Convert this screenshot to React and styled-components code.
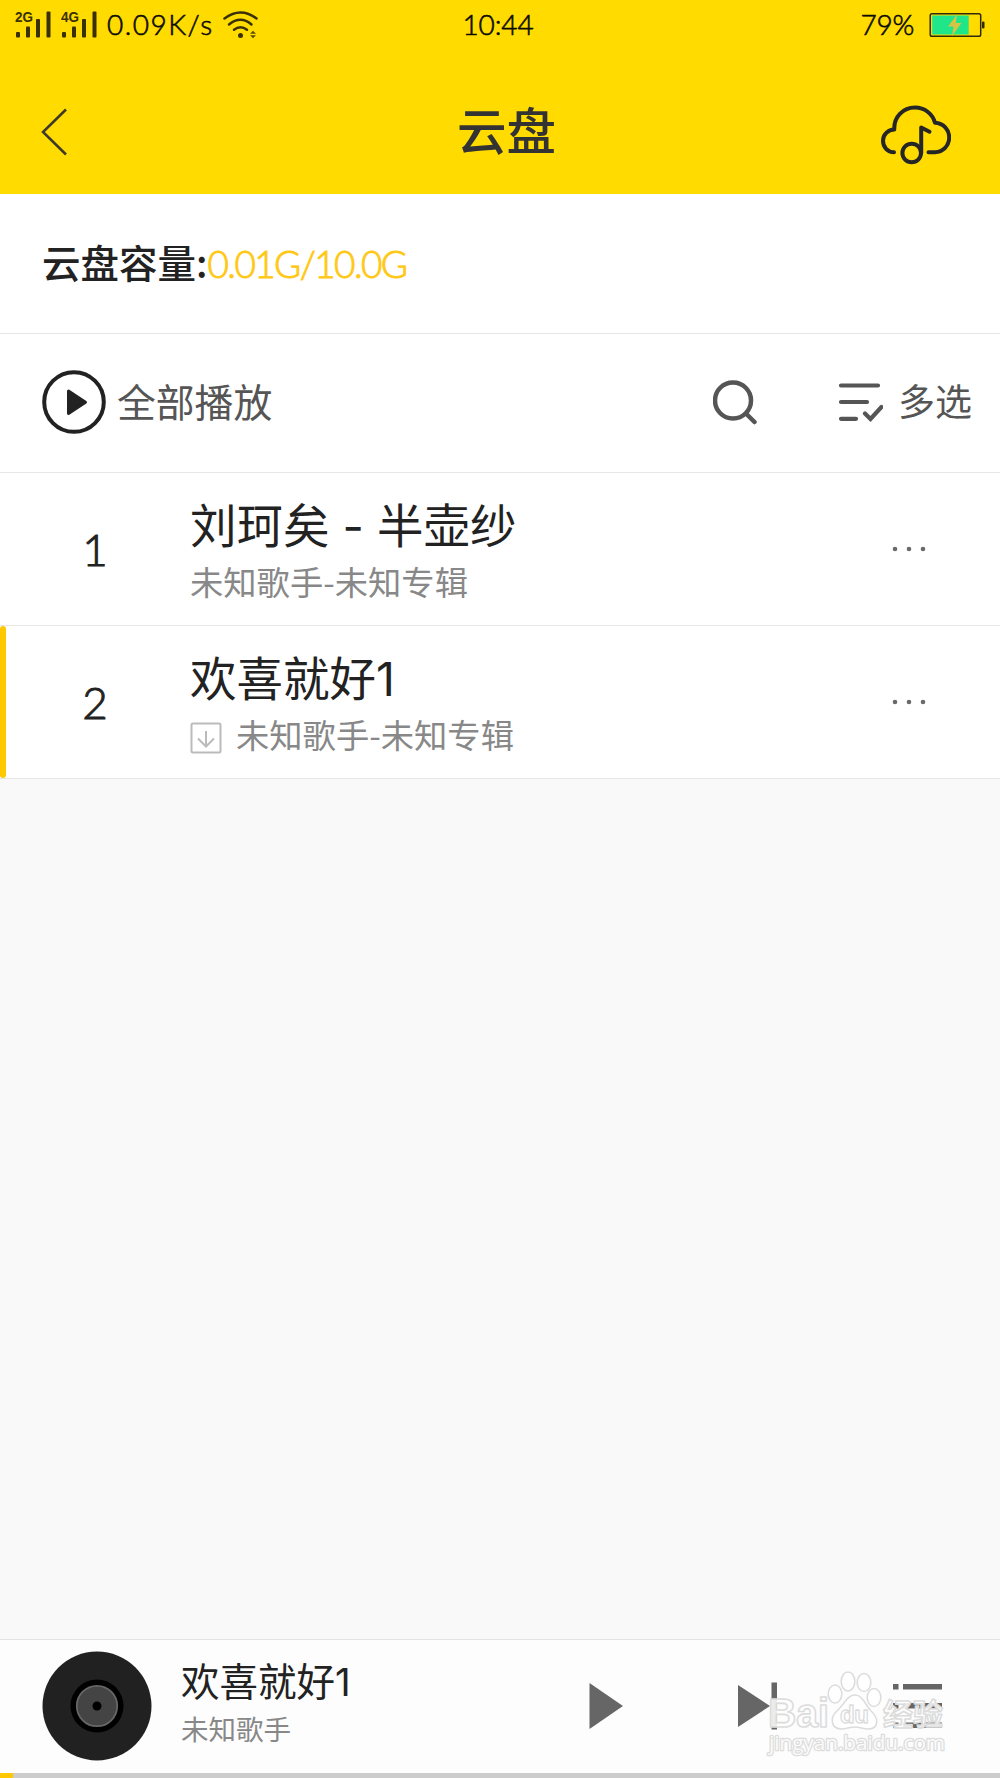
import React from "react";
import styled, { createGlobalStyle } from "styled-components";

const songs = [
  { id: 1, title: "刘珂矣 - 半壶纱", detail: "未知歌手-未知专辑" },
  {
    id: 2,
    title: "欢喜就好1",
    detail: "未知歌手-未知专辑",
    downloaded: true,
    active: true,
  },
];

const SignalIcon = ({ label }) => (
  <svg width="37" height="34" viewBox="0 -3 37 34">
    <text
      x="0"
      y="11"
      fontSize="14"
      fontWeight="700"
      fontFamily="Liberation Sans, sans-serif"
      textLength="18"
      lengthAdjust="spacingAndGlyphs"
      fill="#3a3005"
    >
      {label}
    </text>
    <g fill="#3a3005">
      <rect x="1" y="21" width="4" height="5.5" rx="1" />
      <rect x="11" y="15.5" width="4" height="11" rx="1" />
      <rect x="21" y="8" width="4" height="18.5" rx="1" />
      <rect x="31.500" y="0.500" width="4" height="26" rx="1" />
    </g>
  </svg>
);

const WifiIcon = () => (
  <svg width="36" height="28" viewBox="0 0 36 28">
    <g fill="none" stroke="#3a3005" strokeWidth="2.500" strokeLinecap="round">
      <path d="M1.500 7.500Q17.500 -4.500 33.500 7.500" />
      <path d="M6 13.500Q17.500 4 28.500 13.500" />
      <path d="M11 18.800Q17.500 13.800 24 18.800" />
    </g>
    <circle cx="17.500" cy="24.500" r="2.500" fill="#3a3005" />
    <path d="M27 22.800l3-3 3 3zM27 24.200l3 3 3-3z" fill="#5d4e05" />
  </svg>
);

const BatteryIcon = () => (
  <svg width="56" height="26" viewBox="0 0 56 26">
    <rect x="3.200" y="3.500" width="36.500" height="19" fill="#1ee689" />
    <rect
      x="1.200"
      y="1.700"
      width="50.500"
      height="22.500"
      rx="1.800"
      fill="none"
      stroke="#2f2a08"
      strokeWidth="1.500"
    />
    <rect x="53" y="9.500" width="2.500" height="7" rx="1" fill="#2f2a08" />
    <path d="M28 2.500L19 14.500h5.500L23 24l9.500-13h-5.700z" fill="#d6c544" />
  </svg>
);

const BackIcon = () => (
  <svg width="27" height="48" viewBox="0 0 27 48">
    <path
      d="M25 1.500L2 24l23 22.500"
      fill="none"
      stroke="#3d3a2c"
      strokeWidth="2.500"
    />
  </svg>
);

const CloudMusicIcon = () => (
  <svg width="70" height="60" viewBox="0 0 70 60">
    <g
      fill="none"
      stroke="#262626"
      strokeWidth="4"
      strokeLinecap="round"
      strokeLinejoin="round"
    >
      <path d="M13 47.200C6.500 47.200 2 42 2 35.800C2 29.600 7 24.600 13.300 24.600C12.600 12 22 2.600 34 2.600C43.500 2.600 51.500 8.600 54 17.800C62.500 18.300 68.200 24.700 68.200 32.500C68.200 40.700 62 47.200 54 47.200H47.500" />
      <circle cx="30.700" cy="48" r="9.300" />
      <path d="M40.200 48V22.500L48.500 26.700" />
    </g>
  </svg>
);

const PlayAllIcon = () => (
  <svg width="64" height="64" viewBox="0 0 64 64">
    <circle cx="32" cy="32" r="29.800" fill="none" stroke="#222" strokeWidth="4" />
    <path
      d="M26.500 21L43.500 32.200L26.500 43.500Z"
      fill="#222"
      stroke="#222"
      strokeWidth="3"
      strokeLinejoin="round"
    />
  </svg>
);

const SearchIcon = () => (
  <svg width="44" height="45" viewBox="0 0 44 45">
    <g fill="none" stroke="#555" strokeWidth="4.500" strokeLinecap="round">
      <circle cx="20" cy="20.500" r="18" />
      <path d="M33 33.500l8.500 8.500" />
    </g>
  </svg>
);

const SelectIcon = () => (
  <svg width="45" height="40" viewBox="0 0 45 40">
    <g fill="none" stroke="#555" strokeWidth="4.200" strokeLinecap="round">
      <path d="M3 3.500h37M3 20h26M3 36.800h15" />
      <path d="M27 31.500l5.500 5.500 11-12" />
    </g>
  </svg>
);

const MoreIcon = () => (
  <svg width="34" height="6" viewBox="0 0 34 6">
    <g fill="#6a6a6a">
      <circle cx="3" cy="3" r="2.300" />
      <circle cx="17" cy="3" r="2.300" />
      <circle cx="31" cy="3" r="2.300" />
    </g>
  </svg>
);

const DownloadIcon = () => (
  <svg width="32" height="32" viewBox="0 0 32 32">
    <g fill="none" stroke="#bbb" strokeWidth="2">
      <rect x="1.500" y="1.500" width="29" height="29" rx="1.500" />
      <path d="M16 9v15M8 16.500l8 8 8-8" />
    </g>
  </svg>
);

const DiscIcon = () => (
  <svg width="110" height="110" viewBox="0 0 110 110">
    <circle cx="55" cy="55" r="54.500" fill="#212121" />
    <circle cx="55" cy="55" r="26.500" fill="#000" />
    <circle cx="55" cy="55" r="20.200" fill="#444" stroke="#666" strokeWidth="1.800" />
    <circle cx="55" cy="55" r="4.500" fill="#000" />
  </svg>
);

const PlayIcon = () => (
  <svg width="34" height="46" viewBox="0 0 34 46">
    <path d="M0.500 0L34 23L0.500 46Z" fill="#666" />
  </svg>
);

const NextIcon = () => (
  <svg width="40" height="48" viewBox="0 0 40 48">
    <path d="M0 3L32 24L0 45Z" fill="#666" />
    <rect x="33.500" y="0.500" width="5.500" height="47" fill="#666" />
  </svg>
);

const QueueIcon = () => (
  <svg width="49" height="46" viewBox="0 0 49 46">
    <g fill="#666">
      <path d="M0 1h5.500v5.500H0zM10 1h39v5.500H10z" />
      <path d="M0 20h5.500v5.500H0zM10 20h39v5.500H10z" />
      <path d="M0 39.500h5.500V45H0zM10 39.500h39V45H10z" />
    </g>
  </svg>
);

const Watermark = () => (
  <Stamp width="184" height="94" viewBox="0 0 184 94">
    <g
      fill="#fff"
      fillOpacity="0.9"
      stroke="#dcdcdc"
      strokeWidth="1.600"
      strokeLinejoin="round"
    >
      <text
        x="2"
        y="57"
        fontSize="40"
        fontWeight="700"
        fontFamily="Liberation Sans, sans-serif"
        textLength="61"
        lengthAdjust="spacingAndGlyphs"
      >
        Bai
      </text>
      <ellipse cx="69" cy="24" rx="6.800" ry="9" />
      <ellipse cx="82" cy="11.500" rx="6.800" ry="9.500" />
      <ellipse cx="98" cy="12.500" rx="6.800" ry="9" />
      <ellipse cx="108" cy="27.500" rx="6.800" ry="9" />
      <path d="M89 25C97 25 99 35 105 41C113 48 113 59 102 59C97 59 94 57 89 57C84 57 80 59 76 59C64 59 64 47 71 41C78 35 81 25 89 25Z" />
      <text
        x="74"
        y="53"
        fontSize="24"
        fontWeight="700"
        fontFamily="Liberation Sans, sans-serif"
        textLength="29"
        strokeWidth="1.300"
      >
        du
      </text>
      <text
        x="117"
        y="55"
        fontSize="30"
        fontWeight="700"
        fontFamily="Noto Sans CJK SC, sans-serif"
        textLength="60"
      >
        经验
      </text>
      <text
        x="3"
        y="80"
        fontSize="20"
        fontFamily="Open Sans, sans-serif"
        textLength="176"
        lengthAdjust="spacingAndGlyphs"
        paintOrder="stroke"
        strokeWidth="2.500"
      >
        jingyan.baidu.com
      </text>
    </g>
  </Stamp>
);

export default function App() {
  return (
    <>
      <GlobalStyle />
      <Screen>
        <StatusBar>
          <StatusGroup>
            <SignalIcon label="2G" />
            <SignalIcon label="4G" />
            <StatusText $spacing="1.5px">0.09K/s</StatusText>
            <WifiIcon />
          </StatusGroup>
          <StatusText $spacing="-0.1px">10:44</StatusText>
          <StatusGroup $end>
            <StatusText $spacing="-0.3px">79%</StatusText>
            <BatteryIcon />
          </StatusGroup>
        </StatusBar>
        <Header>
          <BackIcon />
          <h1>云盘</h1>
          <CloudMusicIcon />
        </Header>
        <Capacity>
          云盘容量:<span>0.01G/10.0G</span>
        </Capacity>
        <Toolbar>
          <PlayAllIcon />
          <ToolbarText>全部播放</ToolbarText>
          <ToolbarActions>
            <SearchIcon />
            <SelectButton>
              <SelectIcon />
              <ToolbarText $small>多选</ToolbarText>
            </SelectButton>
          </ToolbarActions>
        </Toolbar>
        <SongList>
          {songs.map((song) => (
            <SongRow key={song.id} $active={song.active}>
              <SongIndex>{song.id}</SongIndex>
              <SongInfo>
                <SongTitle>{song.title}</SongTitle>
                <SongDetail>
                  {song.downloaded && <DownloadIcon />}
                  {song.detail}
                </SongDetail>
              </SongInfo>
              <MoreIcon />
            </SongRow>
          ))}
        </SongList>
        <Player>
          <DiscIcon />
          <PlayerInfo>
            <PlayerTitle>欢喜就好1</PlayerTitle>
            <PlayerArtist>未知歌手</PlayerArtist>
          </PlayerInfo>
          <PlayerControls>
            <PlayIcon />
            <NextIcon />
            <QueueIcon />
          </PlayerControls>
          <Watermark />
        </Player>
        <Progress>
          <ProgressFill style={{ width: "1.3%" }} />
        </Progress>
      </Screen>
    </>
  );
}

const GlobalStyle = createGlobalStyle`
  * {
    box-sizing: border-box;
  }
  body {
    margin: 0;
    font-family: "Noto Sans CJK SC", sans-serif;
    color: #222;
  }
  svg {
    display: block;
    flex: none;
  }
`;

const Screen = styled.div`
  width: 1000px;
  height: 1778px;
  display: flex;
  flex-direction: column;
  overflow: hidden;
  background: #f9f9f9;
`;

const StatusBar = styled.div`
  height: 70px;
  padding: 0 15px 21px;
  display: grid;
  grid-template-columns: 1fr auto 1fr;
  align-items: center;
  background: #ffdb00;
  > span {
    margin-right: 4px;
  }
`;

const StatusGroup = styled.div`
  display: flex;
  align-items: center;
  gap: ${(props) => (props.$end ? "15px" : "9px")};
  justify-content: ${(props) => (props.$end ? "flex-end" : "flex-start")};
`;

const StatusText = styled.span`
  padding-bottom: 2px;
  font-family: Lato, sans-serif;
  font-size: 28px;
  font-weight: 300;
  line-height: 30px;
  letter-spacing: ${(props) => props.$spacing};
  color: #0c0b02;
  -webkit-text-stroke: 0.6px;
  white-space: nowrap;
`;

const Header = styled.header`
  height: 124px;
  padding: 0 49px 0 41px;
  display: grid;
  grid-template-columns: 1fr auto 1fr;
  align-items: center;
  background: #ffdb00;
  h1 {
    margin: 0;
    padding: 0 0 7px 21px;
    font-size: 49.500px;
    font-weight: 500;
    line-height: 60px;
    color: #333;
  }
  svg:last-child {
    justify-self: end;
    margin-top: 5px;
  }
`;

const Capacity = styled.div`
  height: 140px;
  padding: 0 0 5px 42px;
  display: flex;
  align-items: center;
  font-size: 38.500px;
  font-weight: 500;
  background: #fff;
  border-bottom: 1px solid #e6e6e6;
  span {
    margin-top: 4px;
    font-family: Lato, sans-serif;
    font-size: 37px;
    font-weight: 300;
    letter-spacing: -1.600px;
    color: #ffc814;
    -webkit-text-stroke: 0.9px;
  }
`;

const Toolbar = styled.div`
  height: 139px;
  padding: 0 28px 2px 42px;
  display: flex;
  align-items: center;
  background: #fff;
  border-bottom: 1px solid #e6e6e6;
`;

const ToolbarText = styled.span`
  margin-left: ${(props) => (props.$small ? "15px" : "11px")};
  padding-bottom: 5px;
  font-size: ${(props) => (props.$small ? "37px" : "38.800px")};
  line-height: 50px;
  color: #555;
`;

const ToolbarActions = styled.div`
  margin-left: auto;
  display: flex;
  align-items: center;
  gap: 81px;
`;

const SelectButton = styled.div`
  display: flex;
  align-items: center;
`;

const SongList = styled.main`
  flex: 1;
`;

const SongRow = styled.div`
  height: 153px;
  padding-right: 74px;
  display: flex;
  align-items: center;
  background: #fff;
  border-bottom: 1px solid #e6e6e6;
  &::before {
    content: "";
    width: 6px;
    height: 100%;
    border-radius: 3px;
    background: ${(props) => (props.$active ? "#ffc800" : "transparent")};
  }
`;

const SongIndex = styled.div`
  width: 178px;
  margin-right: 6px;
  text-align: center;
  font-family: Lato, sans-serif;
  font-size: 44px;
  font-weight: 300;
  -webkit-text-stroke: 1px;
`;

const SongInfo = styled.div`
  flex: 1;
`;

const SongTitle = styled.div`
  padding-top: 4px;
  font-family: Inter, "Noto Sans CJK SC", sans-serif;
  font-size: 46.500px;
  line-height: 60px;
  white-space: pre;
`;

const SongDetail = styled.div`
  display: flex;
  align-items: center;
  gap: 14px;
  font-size: 33.300px;
  line-height: 50px;
  color: #888;
  svg {
    margin-top: 7px;
  }
`;

const Player = styled.footer`
  position: relative;
  height: 134px;
  padding: 0 58px 2px 42px;
  display: flex;
  align-items: center;
  background: #fdfdfd;
  border-top: 1px solid #e3e3e3;
`;

const PlayerInfo = styled.div`
  margin: -4px 0 0 29px;
`;

const PlayerTitle = styled.div`
  font-family: Inter, "Noto Sans CJK SC", sans-serif;
  font-size: 38.500px;
  line-height: 48px;
`;

const PlayerArtist = styled.div`
  font-size: 27.500px;
  line-height: 44px;
  color: #888;
`;

const PlayerControls = styled.div`
  margin-left: auto;
  display: flex;
  align-items: center;
  gap: 115px;
`;

const Stamp = styled.svg`
  position: absolute;
  right: 50px;
  bottom: 9px;
`;

const Progress = styled.div`
  height: 5px;
  background: #ccc;
`;

const ProgressFill = styled.div`
  height: 100%;
  background: #ffc800;
`;
